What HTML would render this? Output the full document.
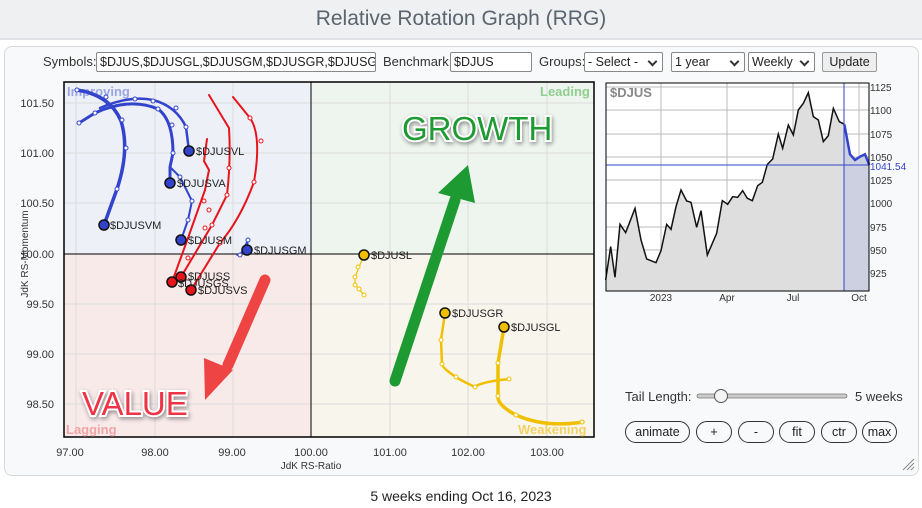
<!DOCTYPE html>
<html><head><meta charset="utf-8"><style>
body{margin:0;width:922px;height:508px;background:#fff;font-family:"Liberation Sans",sans-serif;position:relative;overflow:hidden}
.hdr{position:absolute;left:0;top:0;width:922px;height:38px;background:#eef0f2;border-bottom:2px solid #dde0e4;text-align:center;font-size:21px;color:#5a6570;line-height:38px}
.panel{position:absolute;left:4px;top:46px;width:913px;height:428px;background:#f8f9fa;border:1px solid #d6d8db;border-radius:8px}
.t{position:absolute;font-size:13px;color:#333;white-space:nowrap}
.inp{position:absolute;border:1px solid #888;background:#fff;font-size:12.5px;line-height:18px;padding-left:3px;overflow:hidden;white-space:nowrap;color:#222;box-sizing:border-box;height:20px;border-radius:2px}
.sel:after{content:"";position:absolute;right:6px;top:5px;width:5px;height:5px;border-right:2px solid #333;border-bottom:2px solid #333;transform:rotate(45deg)}
.btn{position:absolute;height:22px;border:1px solid #333;border-radius:11px;background:#f8f9fa;font-size:12.5px;line-height:21px;text-align:center;box-sizing:border-box;color:#222}
.foot{position:absolute;top:488px;width:922px;text-align:center;font-size:14px;color:#222}
</style></head><body>
<div class="hdr">Relative Rotation Graph (RRG)</div>
<div class="panel"></div>
<div class="t" style="left:43px;top:54px">Symbols:</div>
<div class="inp" style="left:96px;top:52px;width:280px">$DJUS,$DJUSGL,$DJUSGM,$DJUSGR,$DJUSGS</div>
<div class="t" style="left:383px;top:54px">Benchmark:</div>
<div class="inp" style="left:450px;top:52px;width:82px">$DJUS</div>
<div class="t" style="left:539px;top:54px">Groups:</div>
<div class="inp sel" style="left:584px;top:52px;width:79px">- Select -</div>
<div class="inp sel" style="left:671px;top:52px;width:74px">1 year</div>
<div class="inp sel" style="left:748px;top:52px;width:67px">Weekly</div>
<div class="inp" style="left:822px;top:52px;width:55px;background:#eee;text-align:center;padding:0;border-color:#999">Update</div>

<svg width="922" height="508" style="position:absolute;left:0;top:0" font-family="Liberation Sans, sans-serif">
<rect x="64" y="82" width="247" height="172" fill="#eef0f8"/>
<rect x="311" y="82" width="283" height="172" fill="#eef5ee"/>
<rect x="64" y="254" width="247" height="183" fill="#f9eaea"/>
<rect x="311" y="254" width="283" height="183" fill="#f8f5ec"/>
<g stroke="#dcdcdc" stroke-width="1">
<line x1="76" y1="82" x2="76" y2="437"/><line x1="155" y1="82" x2="155" y2="437"/><line x1="233" y1="82" x2="233" y2="437"/><line x1="390" y1="82" x2="390" y2="437"/><line x1="468" y1="82" x2="468" y2="437"/><line x1="547" y1="82" x2="547" y2="437"/>
<line x1="64" y1="103" x2="594" y2="103"/><line x1="64" y1="153" x2="594" y2="153"/><line x1="64" y1="203" x2="594" y2="203"/><line x1="64" y1="304" x2="594" y2="304"/><line x1="64" y1="354" x2="594" y2="354"/><line x1="64" y1="404" x2="594" y2="404"/>
</g>
<line x1="311" y1="82" x2="311" y2="437" stroke="#000"/><line x1="64" y1="254" x2="594" y2="254" stroke="#000"/>
<rect x="64" y="82" width="530" height="355" fill="none" stroke="#000" stroke-width="1.5"/>
<g font-size="13" font-weight="bold">
<text x="67" y="96" fill="#9aa6e4">Improving</text>
<text x="540" y="96" fill="#8fcf8f">Leading</text>
<text x="66" y="434" fill="#f0a4a4">Lagging</text>
<text x="518" y="434" fill="#f3d264">Weakening</text>
</g>
<g font-size="11" fill="#333" text-anchor="end">
<text x="54" y="107">101.50</text><text x="54" y="157">101.00</text><text x="54" y="207">100.50</text><text x="54" y="258">100.00</text><text x="54" y="308">99.50</text><text x="54" y="358">99.00</text><text x="54" y="408">98.50</text>
</g>
<g font-size="11" fill="#333" text-anchor="middle">
<text x="70" y="456">97.00</text><text x="155" y="456">98.00</text><text x="232" y="456">99.00</text><text x="311" y="456">100.00</text><text x="390" y="456">101.00</text><text x="468" y="456">102.00</text><text x="547" y="456">103.00</text>
<text x="311" y="469" font-size="10">JdK RS-Ratio</text>
<text transform="translate(28,254) rotate(-90)" font-size="10">JdK RS-Momentum</text>
</g>
<g fill="none" stroke="#3344cc" stroke-linecap="round" stroke-linejoin="round">
<path d="M77,90 Q110,95 121,121 Q130,150 117,189 L104,225" stroke-width="3.5"/>
<path d="M79,123 L95,113 Q130,97 158,109 Q173,120 173,153 L170,167 L170,183" stroke-width="3"/>
<path d="M100,108 Q130,95 153,100 Q176,106 186,127 L189,151" stroke-width="2.5"/>
<path d="M170,167 L180,177 L192,201 L188,220 L181,240" stroke-width="2"/>
<path d="M237,255 L240,255 L248,240 L247,250" stroke-width="1.5"/>
</g>
<g fill="#fff" stroke="#3344cc" stroke-width="1">
<circle cx="77" cy="90" r="2"/><circle cx="106" cy="97" r="2"/><circle cx="122" cy="120" r="2"/><circle cx="126" cy="148" r="2"/><circle cx="117" cy="189" r="2"/>
<circle cx="79" cy="123" r="2"/><circle cx="95" cy="113" r="2"/><circle cx="135" cy="99" r="2"/><circle cx="158" cy="109" r="2"/><circle cx="172" cy="125" r="2"/><circle cx="173" cy="153" r="2"/>
<circle cx="153" cy="101" r="2"/><circle cx="176" cy="108" r="2"/><circle cx="186" cy="127" r="2"/>
<circle cx="180" cy="177" r="2"/><circle cx="192" cy="201" r="2"/><circle cx="188" cy="220" r="2"/>
<circle cx="248" cy="240" r="2"/><circle cx="240" cy="255" r="2"/>
</g>
<g fill="none" stroke="#e8141c" stroke-width="2" stroke-linecap="round">
<path d="M233,97 L250,118 Q262,135 254,182 Q240,220 220,243 L191,290"/>
<path d="M209,95 L229,128 Q231,160 227,195 L212,225 L181,277"/>
<path d="M207,139 L204,161 L209,170 L205,190 L188,238 L172,282"/>
</g>
<g fill="#fff" stroke="#e8141c" stroke-width="1">
<circle cx="250" cy="118" r="2"/><circle cx="261" cy="141" r="2"/><circle cx="254" cy="182" r="2"/><circle cx="220" cy="243" r="2"/>
<circle cx="229" cy="168" r="2"/><circle cx="227" cy="195" r="2"/><circle cx="212" cy="225" r="2"/>
<circle cx="204" cy="201" r="2"/><circle cx="209" cy="210" r="2"/><circle cx="205" cy="228" r="2"/><circle cx="188" cy="258" r="2"/>
</g>
<g fill="none" stroke="#f0c000" stroke-linecap="round">
<path d="M364,295 L359,289 L355,285 L355,277 L364,255" stroke-width="1.2"/>
<path d="M509,379 Q480,382 475,387 Q460,380 456,377 Q442,368 442,364 L441,340 L445,313" stroke-width="2.5"/>
<path d="M583,422 Q545,428 516,415 Q497,405 498,396 L498,363 L504,327" stroke-width="3.5"/>
</g>
<g fill="#fff" stroke="#f0c000" stroke-width="1">
<circle cx="364" cy="295" r="2"/><circle cx="359" cy="289" r="2"/><circle cx="355" cy="285" r="2"/><circle cx="355" cy="277" r="2"/><circle cx="358" cy="267" r="2"/>
<circle cx="509" cy="379" r="2"/><circle cx="475" cy="387" r="2"/><circle cx="456" cy="377" r="2"/><circle cx="442" cy="364" r="2"/><circle cx="441" cy="340" r="2"/>
<circle cx="582" cy="422" r="2"/><circle cx="516" cy="415" r="2"/><circle cx="498" cy="396" r="2"/><circle cx="498" cy="363" r="2"/>
</g>
<g stroke="#111" stroke-width="1.5">
<circle cx="104" cy="225" r="5" fill="#3344cc"/><circle cx="170" cy="183" r="5" fill="#3344cc"/><circle cx="189" cy="151" r="5" fill="#3344cc"/><circle cx="181" cy="240" r="5" fill="#3344cc"/><circle cx="247" cy="250" r="5" fill="#3344cc"/>
<circle cx="172" cy="282" r="5" fill="#e8141c"/><circle cx="181" cy="277" r="5" fill="#e8141c"/><circle cx="191" cy="290" r="5" fill="#e8141c"/>
<circle cx="364" cy="255" r="5" fill="#f0c000"/><circle cx="445" cy="313" r="5" fill="#f0c000"/><circle cx="504" cy="327" r="5" fill="#f0c000"/>
</g>
<g font-size="11" fill="#222">
<text x="110" y="229">$DJUSVM</text><text x="177" y="187">$DJUSVA</text><text x="196" y="155">$DJUSVL</text><text x="188" y="244">$DJUSM</text><text x="254" y="254">$DJUSGM</text>
<text x="188" y="280">$DJUSS</text><text x="178" y="287">$DJUSGS</text><text x="198" y="294">$DJUSVS</text>
<text x="371" y="259">$DJUSL</text><text x="452" y="317">$DJUSGR</text><text x="511" y="331">$DJUSGL</text>
</g>
<line x1="395" y1="381" x2="455" y2="200" stroke="#1e9a32" stroke-width="11" stroke-linecap="round"/>
<polygon points="468,165 475,203 438,193" fill="#1e9a32"/>
<line x1="265" y1="280" x2="228" y2="365" stroke="#ee4444" stroke-width="11" stroke-linecap="round"/>
<polygon points="205,400 204,358 233,370" fill="#ee4444"/>
<text x="402" y="140" font-size="33" fill="#1e9a32" stroke="#fff" stroke-width="4" paint-order="stroke" style="filter:drop-shadow(1px 2px 2px rgba(0,0,0,.4))">GROWTH</text>
<text x="82" y="415" font-size="33" fill="#ee3344" stroke="#fff" stroke-width="4" paint-order="stroke" style="filter:drop-shadow(1px 2px 2px rgba(0,0,0,.4))">VALUE</text>

<rect x="606" y="83" width="263" height="208" fill="#fff" stroke="#000"/>
<g stroke="#bbb" stroke-width="1">
<line x1="661" y1="83" x2="661" y2="291"/><line x1="727" y1="83" x2="727" y2="291"/><line x1="793" y1="83" x2="793" y2="291"/><line x1="859" y1="83" x2="859" y2="291"/>
<line x1="606" y1="87" x2="869" y2="87"/><line x1="606" y1="110" x2="869" y2="110"/><line x1="606" y1="134" x2="869" y2="134"/><line x1="606" y1="157" x2="869" y2="157"/><line x1="606" y1="180" x2="869" y2="180"/><line x1="606" y1="203" x2="869" y2="203"/><line x1="606" y1="227" x2="869" y2="227"/><line x1="606" y1="250" x2="869" y2="250"/><line x1="606" y1="273" x2="869" y2="273"/>
</g>
<g transform="translate(460,40) scale(0.33333)">
<path d="M437,720 L452,620 L465,712 L480,553 L497,578 L525,505 L543,600 L560,657 L588,668 L603,632 L620,553 L633,568 L648,500 L663,450 L680,483 L693,487 L710,562 L723,512 L742,645 L770,580 L787,482 L803,493 L818,470 L833,472 L848,452 L862,475 L877,482 L893,437 L907,427 L922,373 L938,357 L955,282 L968,325 L985,255 L1000,285 L1015,210 L1030,190 L1045,158 L1060,230 L1075,240 L1090,305 L1105,287 L1120,205 L1138,245 L1153,253 L1153,753 L437,753Z" fill="#dedede"/>
<path d="M1153,253 L1170,343 L1185,360 L1200,350 L1215,343 L1228,375 L1228,753 L1153,753Z" fill="#ccd0e0"/>
<path d="M437,720 L452,620 L465,712 L480,553 L497,578 L525,505 L543,600 L560,657 L588,668 L603,632 L620,553 L633,568 L648,500 L663,450 L680,483 L693,487 L710,562 L723,512 L742,645 L770,580 L787,482 L803,493 L818,470 L833,472 L848,452 L862,475 L877,482 L893,437 L907,427 L922,373 L938,357 L955,282 L968,325 L985,255 L1000,285 L1015,210 L1030,190 L1045,158 L1060,230 L1075,240 L1090,305 L1105,287 L1120,205 L1138,245 L1153,253" fill="none" stroke="#111" stroke-width="1.5" vector-effect="non-scaling-stroke"/>
<path d="M1153,253 L1170,343 L1185,360 L1200,350 L1215,343 L1228,375" fill="none" stroke="#3344cc" stroke-width="2.5" vector-effect="non-scaling-stroke"/>
</g>
<line x1="606" y1="165" x2="869" y2="165" stroke="#3344cc"/>
<line x1="844" y1="83" x2="844" y2="291" stroke="#3344cc"/>
<rect x="606" y="83" width="263" height="208" fill="none" stroke="#000"/>
<text x="610" y="97" font-size="13" font-weight="bold" fill="#888">$DJUS</text>
<g font-size="10" fill="#333">
<text x="870" y="91">1125</text><text x="870" y="114">1100</text><text x="870" y="138">1075</text><text x="870" y="161">1050</text><text x="870" y="184">1025</text><text x="870" y="207">1000</text><text x="870" y="231">975</text><text x="870" y="254">950</text><text x="870" y="277">925</text>
<text x="870" y="170" fill="#3344cc">1041.54</text>
</g>
<g font-size="10" fill="#333" text-anchor="middle">
<text x="661" y="301">2023</text><text x="727" y="301">Apr</text><text x="793" y="301">Jul</text><text x="859" y="301">Oct</text>
</g>
<rect x="697" y="394" width="150" height="4" rx="2" fill="#ccc" stroke="#777" stroke-width="0.8"/>
<circle cx="721" cy="396" r="6.5" fill="#f4f4f4" stroke="#555"/>
<g stroke="#888" stroke-width="1"><line x1="903" y1="470" x2="914" y2="459"/><line x1="907" y1="470" x2="914" y2="463"/><line x1="911" y1="470" x2="914" y2="467"/></g>
</svg>
<div class="t" style="left:625px;top:389px">Tail Length:</div>
<div class="t" style="left:855px;top:389px">5 weeks</div>
<div class="btn" style="left:625px;top:421px;width:65px">animate</div>
<div class="btn" style="left:696px;top:421px;width:36px">+</div>
<div class="btn" style="left:738px;top:421px;width:36px">-</div>
<div class="btn" style="left:779px;top:421px;width:36px">fit</div>
<div class="btn" style="left:821px;top:421px;width:36px">ctr</div>
<div class="btn" style="left:862px;top:421px;width:35px">max</div>
<div class="foot">5 weeks ending Oct 16, 2023</div>
</body></html>
